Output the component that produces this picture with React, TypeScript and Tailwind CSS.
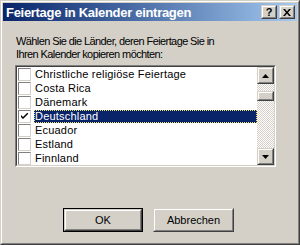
import { useState } from 'react'

// Klassischer Windows-Dialog: Feiertage in Kalender eintragen

const COUNTRIES = [
  'Christliche religiöse Feiertage',
  'Costa Rica',
  'Dänemark',
  'Deutschland',
  'Ecuador',
  'Estland',
  'Finnland',
]

function Raised({ className = '', children }: { className?: string; children?: React.ReactNode }) {
  return (
    <div className={`border border-[#d4d0c8] border-r-[#404040] border-b-[#404040] ${className}`}>
      <div className="w-full h-full border border-white border-r-[#808080] border-b-[#808080] bg-[#d4d0c8] flex items-center justify-center">
        {children}
      </div>
    </div>
  )
}

function Arrow({ down }: { down?: boolean }) {
  return (
    <svg width="7" height="4" viewBox="0 0 7 4">
      <path d={down ? 'M0 0h7L3.5 4z' : 'M0 4h7L3.5 0z'} fill="#000" />
    </svg>
  )
}

export default function App() {
  const [checked, setChecked] = useState<string[]>(['Deutschland'])
  const [selected, setSelected] = useState('Deutschland')

  const toggle = (c: string) =>
    setChecked((prev) => (prev.includes(c) ? prev.filter((x) => x !== c) : [...prev, c]))

  return (
    <div className="w-[300px] h-[245px] bg-[#d4d0c8] border border-[#d4d0c8] border-r-[#404040] border-b-[#404040] font-['Liberation_Sans',Arial,sans-serif] text-[11px] text-black">
      <div className="h-full border border-white border-r-[#808080] border-b-[#808080] p-px flex flex-col">
        {/* Titelleiste */}
        <div className="h-[18px] flex items-center pl-[3px] pr-[2px] bg-gradient-to-r from-[#0a246a] to-[#a6caf0]">
          <span className="flex-1 text-white font-bold text-[13px] leading-none tracking-[-0.3px]">
            Feiertage in Kalender eintragen
          </span>
          <div className="flex gap-[2px]">
            <Raised className="w-[16px] h-[14px]">
              <span className="font-bold text-[11px] leading-none">?</span>
            </Raised>
            <Raised className="w-[16px] h-[14px]">
              <svg width="8" height="7" viewBox="0 0 8 7">
                <path d="M0 0h2l2 2.5L6 0h2L5 3.5 8 7H6L4 4.5 2 7H0l3-3.5z" fill="#000" />
              </svg>
            </Raised>
          </div>
        </div>

        {/* Inhalt */}
        <div className="flex-1 flex flex-col pl-[12px] pt-[14px]">
          <p className="leading-[13px] pl-px tracking-[-0.6px]">
            Wählen Sie die Länder, deren Feiertage Sie in
            <br />
            Ihren Kalender kopieren möchten:
          </p>

          <div className="mt-[4px] w-[261px] h-[102px] border border-[#808080] border-r-white border-b-white">
            <div className="h-full border border-[#404040] border-r-[#d4d0c8] border-b-[#d4d0c8] bg-white flex">
              <ul className="flex-1 flex flex-col">
                {COUNTRIES.map((c) => (
                  <li
                    key={c}
                    onClick={() => setSelected(c)}
                    className="h-[14px] flex items-center pl-px cursor-default"
                  >
                    <button
                      onClick={() => toggle(c)}
                      className="w-[13px] h-[13px] bg-white border border-[#808080] border-r-[#d4d0c8] border-b-[#d4d0c8] flex items-center justify-center shrink-0"
                    >
                      {checked.includes(c) && (
                        <svg width="7" height="7" viewBox="0 0 7 7">
                          <path d="M0 2v2l2 2 5-5V-1L2 4z" fill="#000" />
                        </svg>
                      )}
                    </button>
                    <span
                      className={`ml-[3px] h-[13px] flex items-center pl-px pr-[2px] leading-none tracking-[0.2px] ${
                        selected === c
                          ? 'flex-1 bg-[#0a246a] text-white outline outline-1 outline-dotted outline-[#f0e060] -outline-offset-1'
                          : ''
                      }`}
                    >
                      {c}
                    </span>
                  </li>
                ))}
              </ul>

              {/* Bildlaufleiste */}
              <div className="w-[17px] flex flex-col bg-[repeating-conic-gradient(#fff_0_25%,#d4d0c8_0_50%)] bg-[length:2px_2px]">
                <Raised className="w-[17px] h-[17px]">
                  <Arrow />
                </Raised>
                <Raised className="w-[17px] h-[10px] mt-[7px]" />
                <div className="flex-1" />
                <Raised className="w-[17px] h-[17px]">
                  <Arrow down />
                </Raised>
              </div>
            </div>
          </div>

          {/* Schaltflächen */}
          <div className="mt-[41px] flex gap-[10px] pl-[48px]">
            <div className="w-[80px] h-[24px] border border-black">
              <Raised className="w-full h-full">
                <span>OK</span>
              </Raised>
            </div>
            <Raised className="w-[81px] h-[24px]">
              <span>Abbrechen</span>
            </Raised>
          </div>
        </div>
      </div>
    </div>
  )
}
